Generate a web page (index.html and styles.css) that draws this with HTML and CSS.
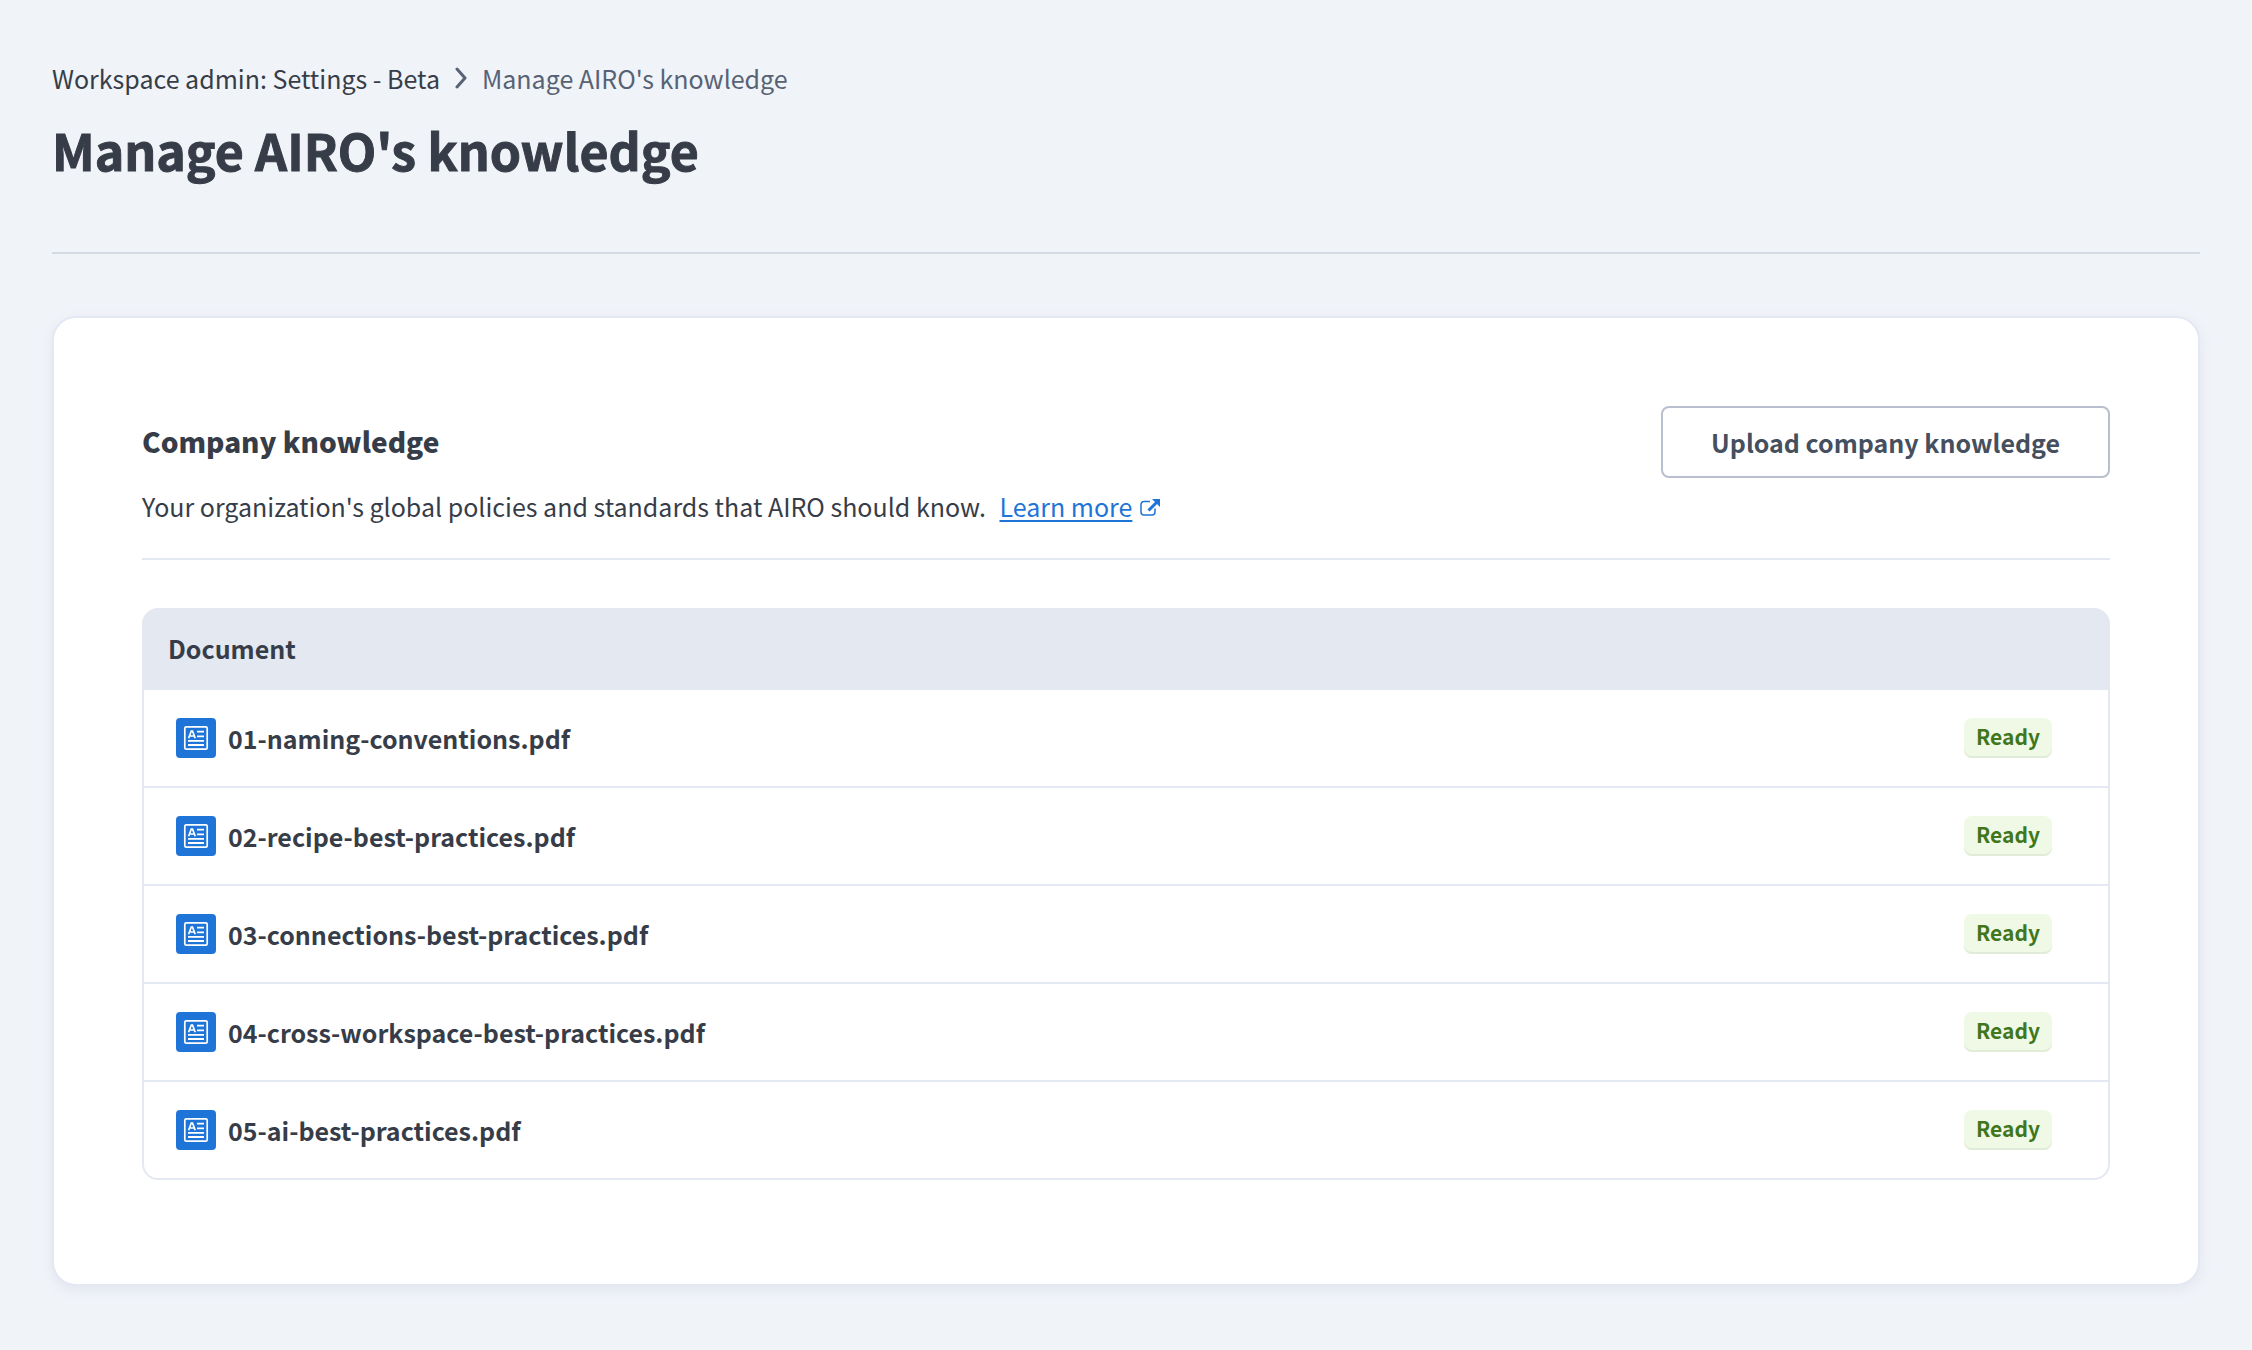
FILE: index.html
```html
<!DOCTYPE html>
<html lang="en">
<head>
<meta charset="utf-8">
<meta name="viewport" content="width=device-width, initial-scale=1">
<title>Manage AIRO's knowledge</title>
<link rel="stylesheet" href="styles.css">
</head>
<body>
<svg class="sprite" aria-hidden="true">
  <symbol id="doc" viewBox="0 0 40 40">
    <rect width="40" height="40" rx="4" fill="#1f74d8"/>
    <rect x="8.800" y="8.800" width="22.400" height="22.400" rx="1.500" fill="none" stroke="#fff" stroke-width="1.700"/>
    <path d="M12.600 20.300L15.300 13h1.200l2.700 7.300M13.600 18h4.700" fill="none" stroke="#fff" stroke-width="1.700"/>
    <path d="M21 13.700h7M21 18.300h7M12 22.800h16M12 27h16" fill="none" stroke="#fff" stroke-width="1.800"/>
  </symbol>
</svg>
<header class="page-header">
  <nav class="breadcrumbs" aria-label="Breadcrumb">
    <a class="crumb" href="#">Workspace admin: Settings - Beta</a>
    <svg class="chevron" viewBox="0 0 12 22" aria-hidden="true"><path d="M2 2l8 9-8 9"/></svg>
    <span class="crumb-current" aria-current="page">Manage AIRO's knowledge</span>
  </nav>
  <h1 class="page-title">Manage AIRO's knowledge</h1>
</header>
<main class="card">
  <div class="section-header">
    <h2 class="section-title">Company knowledge</h2>
    <button class="upload" type="button">Upload company knowledge</button>
  </div>
  <p class="description">Your organization's global policies and standards that AIRO should know.
    <a class="learn-more" href="#"><span class="link-text">Learn more</span><svg class="external" viewBox="0 0 20 18" aria-hidden="true"><path class="external-box" d="M10 2.500H4a3 3 0 0 0-3 3V13a3 3 0 0 0 3 3h8a3 3 0 0 0 3-3V9.500"/><path class="external-shaft" d="M8.500 11.500L17 3"/><path class="external-head" d="M12 0h8v8z"/></svg></a></p>
  <div class="table-frame">
    <table class="documents">
      <thead><tr><th scope="col" colspan="2">Document</th></tr></thead>
      <tbody>
        <tr><td><div class="file"><svg class="doc-icon" aria-hidden="true"><use href="#doc"/></svg>01-naming-conventions.pdf</div></td><td><span class="badge">Ready</span></td></tr>
        <tr><td><div class="file"><svg class="doc-icon" aria-hidden="true"><use href="#doc"/></svg>02-recipe-best-practices.pdf</div></td><td><span class="badge">Ready</span></td></tr>
        <tr><td><div class="file"><svg class="doc-icon" aria-hidden="true"><use href="#doc"/></svg>03-connections-best-practices.pdf</div></td><td><span class="badge">Ready</span></td></tr>
        <tr><td><div class="file"><svg class="doc-icon" aria-hidden="true"><use href="#doc"/></svg>04-cross-workspace-best-practices.pdf</div></td><td><span class="badge">Ready</span></td></tr>
        <tr><td><div class="file"><svg class="doc-icon" aria-hidden="true"><use href="#doc"/></svg>05-ai-best-practices.pdf</div></td><td><span class="badge">Ready</span></td></tr>
      </tbody>
    </table>
  </div>
</main>
</body>
</html>
```
FILE: styles.css
```css
* { box-sizing: border-box; }
body { margin: 0; padding: 58px 52px 64px; background: #f0f3f8; color: #373d48; font-family: "Noto Sans CJK JP", sans-serif; font-size: 25px; line-height: 40px; }
.sprite { position: absolute; width: 0; height: 0; }
.page-header { border-bottom: 2px solid #d3dae4; padding-bottom: 68px; margin-bottom: 62px; }
.breadcrumbs { display: flex; align-items: center; gap: 15px; }
.crumb { color: #373d48; text-decoration: none; }
.crumb-current { color: #576375; }
.chevron { width: 12px; height: 22px; fill: none; stroke: #576375; stroke-width: 3; stroke-linecap: round; stroke-linejoin: round; }
.page-title { margin: 16px 0 0; font-size: 50px; line-height: 70px; font-weight: 700; -webkit-text-stroke: 1px currentColor; }
.card { padding: 88px 88px 104px; border: 2px solid #e4e8f2; border-radius: 24px; background: #fff; box-shadow: 0 4px 12px #e2e6ee; }
.section-header { display: flex; justify-content: space-between; align-items: center; }
.section-title { margin: 0 0 2px; font-size: 28px; font-weight: 900; }
.upload { height: 72px; padding: 0 48px; border: 2px solid #b9bfce; border-radius: 8px; background: #fff; color: #454f5e; font: inherit; font-weight: 700; }
.description { margin: 8px 0 48px; padding-bottom: 32px; border-bottom: 2px solid #e4e8f2; }
.learn-more { color: #1f74d8; margin-left: 8px; text-decoration: none; }
.link-text { text-decoration: underline 2px; text-underline-offset: 3px; }
.external { width: 20px; height: 18px; margin-left: 8px; fill: none; stroke: currentColor; }
.external-box { stroke-width: 1.5; }
.external-shaft { stroke-width: 3; }
.external-head { fill: currentColor; stroke: none; }
.table-frame { border: 2px solid #e4e8f1; border-radius: 16px; overflow: hidden; background: #e4e8f1; }
.documents { width: 100%; border-spacing: 0; }
th { height: 80px; padding: 0 24px 4px; text-align: left; font-weight: 700; }
td { height: 98px; padding: 0 56px 0 32px; border-bottom: 2px solid #e4e8f2; background: #fff; }
tr:last-child td { height: 96px; border-bottom: 0; }
.file { display: flex; align-items: center; gap: 12px; font-weight: 700; }
.doc-icon { width: 40px; height: 40px; }
.badge { display: block; width: fit-content; margin-left: auto; padding: 0 12px 4px; border-radius: 8px; background: #f0f9e6; box-shadow: inset 0 -2px #e0ebd8; color: #41771c; font-size: 21px; line-height: 36px; font-weight: 700; }
```
